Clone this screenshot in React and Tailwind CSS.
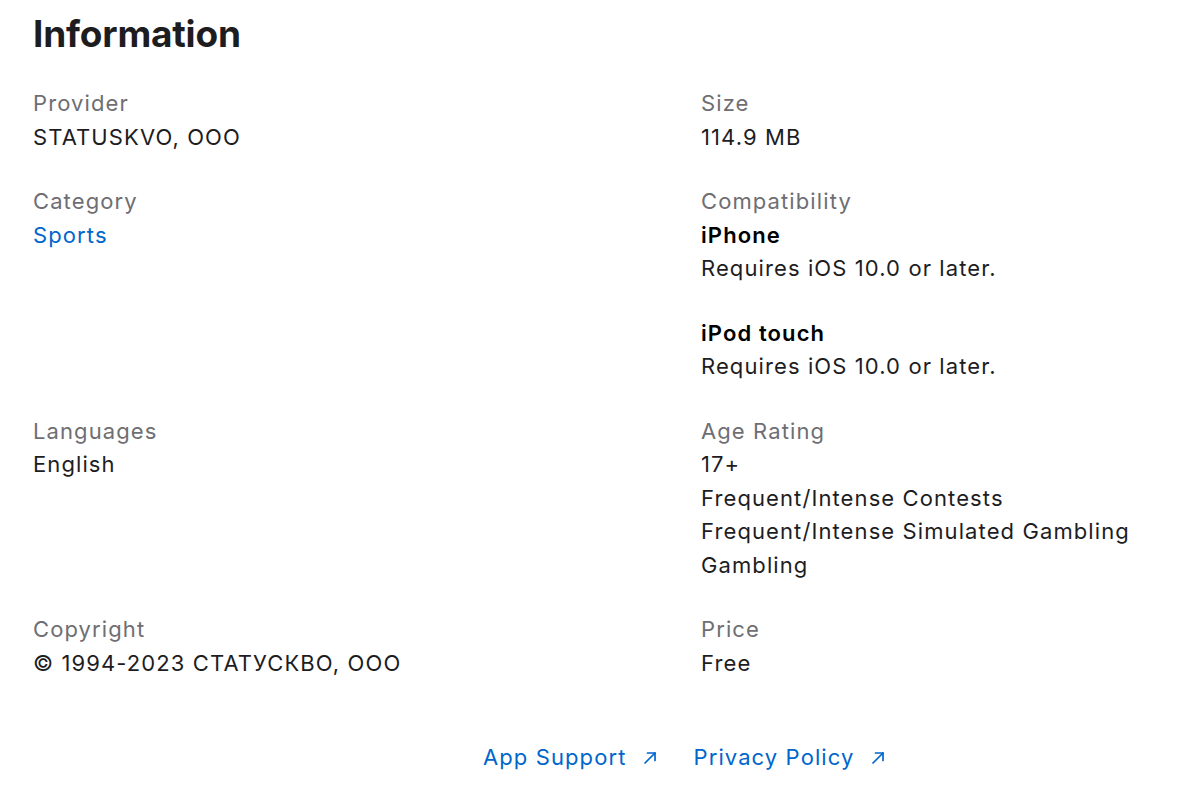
import React from "react";

const rows = [
  {
    left: { label: "Provider", lines: ["STATUSKVO, OOO"] },
    right: { label: "Size", lines: ["114.9 MB"] },
  },
  {
    left: { label: "Category", lines: ["Sports"], link: true },
    right: { label: "Compatibility", devices: true },
  },
  {
    left: { label: "Languages", lines: ["English"] },
    right: {
      label: "Age Rating",
      lines: [
        "17+",
        "Frequent/Intense Contests",
        "Frequent/Intense Simulated Gambling",
        "Gambling",
      ],
    },
  },
  {
    left: { label: "Copyright", lines: ["© 1994-2023 СТАТУСКВО, ООО"] },
    right: { label: "Price", lines: ["Free"] },
  },
];

const devices = [
  { name: "iPhone", req: "Requires iOS 10.0 or later." },
  { name: "iPod touch", req: "Requires iOS 10.0 or later." },
];

const Arrow = () => (
  <svg
    viewBox="0 0 14 14"
    className="ml-4 h-[14px] w-[14px]"
    fill="none"
    stroke="currentColor"
    strokeWidth="1.7"
    strokeLinecap="round"
    strokeLinejoin="round"
  >
    <path d="M2 12 L12 2" />
    <path d="M4.5 2 H12 V9.5" />
  </svg>
);

const Item = ({ item }) => (
  <div>
    <p className="text-[#6e6e73]">{item.label}</p>
    {item.devices ? (
      <div className="space-y-[31px]">
        {devices.map((d) => (
          <div key={d.name}>
            <p className="font-semibold text-black">{d.name}</p>
            <p className="text-[#1d1d1f]">{d.req}</p>
          </div>
        ))}
      </div>
    ) : (
      item.lines.map((l) => (
        <p key={l} className={item.link ? "text-[#0066cc]" : "text-[#1d1d1f]"}>
          {l}
        </p>
      ))
    )}
  </div>
);

export default function App() {
  return (
    <div
      className="min-h-[800px] bg-white px-[33px] pt-[12px] text-[22px] leading-[33.5px] tracking-[1.1px]"
      style={{ fontFamily: "Inter, 'Noto Sans', sans-serif" }}
    >
      <h2 className="text-[37px] font-bold leading-[44px] tracking-[-0.2px] text-[#1d1d1f]">
        Information
      </h2>

      {/* info grid – rows line up across both columns */}
      <div className="mt-[31px] grid grid-cols-[668px_1fr] gap-y-[31px]">
        {rows.map((r) => (
          <React.Fragment key={r.left.label}>
            <Item item={r.left} />
            <Item item={r.right} />
          </React.Fragment>
        ))}
      </div>

      <div className="mt-[61px] flex pl-[450px] text-[#0066cc]">
        <a className="flex items-center">
          App Support
          <Arrow />
        </a>
        <a className="ml-[37px] flex items-center">
          Privacy Policy
          <Arrow />
        </a>
      </div>
    </div>
  );
}
